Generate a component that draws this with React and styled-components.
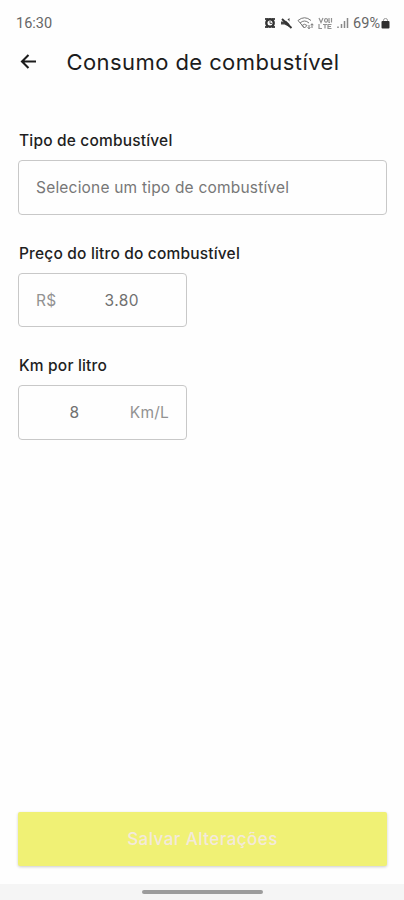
import styled, { createGlobalStyle } from "styled-components";

const GlobalStyle = createGlobalStyle`
  * {
    box-sizing: border-box;
  }
  body {
    margin: 0;
    background-color: #fefefe;
    font-family: Inter, "Liberation Sans", sans-serif;
  }
`;

const Screen = styled.div`
  display: flex;
  flex-direction: column;
  height: 100vh;
  min-height: 900px;
  overflow: hidden;
`;

const StatusBar = styled.div`
  display: flex;
  align-items: center;
  justify-content: space-between;
  height: 36px;
  padding: 10px 14px 0 16px;
  font-family: Roboto, sans-serif;
  font-size: 14.5px;
  color: #666666;
`;

const StatusIcons = styled.div`
  display: flex;
  align-items: center;
  gap: 4px;
`;

const Battery = styled.div`
  display: flex;
  align-items: center;
  gap: 1px;
  font-size: 14.5px;
`;

const Header = styled.header`
  display: flex;
  align-items: center;
  height: 51px;
  padding-left: 20px;
`;

const BackButton = styled.button`
  display: flex;
  width: 18px;
  padding: 0;
  border: none;
  background: none;
  color: #1c1c1c;
  cursor: pointer;
`;

const Title = styled.h1`
  margin: 0 0 0 28.5px;
  font-size: 22px;
  font-weight: 400;
  letter-spacing: 0.42px;
  color: #1c1c1c;
  white-space: nowrap;
`;

const Form = styled.form`
  display: flex;
  flex: 1;
  flex-direction: column;
  padding: 43px 17px 18px 18px;
`;

const Field = styled.div`
  margin-bottom: 28px;
`;

const Label = styled.label`
  display: block;
  height: 30px;
  padding-left: 1px;
  font-size: 15.5px;
  font-weight: 500;
  line-height: 21px;
  letter-spacing: 0.18px;
  color: #1f1f1f;
`;

const InputBox = styled.div`
  display: flex;
  align-items: center;
  width: ${(props) => (props.$half ? "169px" : "100%")};
  height: 54.5px;
  padding: 1px 17px 0;
  border: 1.5px solid #c8c8c8;
  border-radius: 4px;
  font-size: 15.5px;
  color: #707070;
`;

const Placeholder = styled.span`
  letter-spacing: 0.2px;
  color: #777777;
`;

const Unit = styled.span`
  letter-spacing: 0.2px;
  color: #929292;
`;

const Value = styled.span`
  flex: 1;
  padding: 0 ${(props) => props.$right || "0"} 0 ${(props) => props.$left || "0"};
  letter-spacing: 0.4px;
  text-align: center;
`;

const SaveButton = styled.button`
  height: 54px;
  margin-top: auto;
  border: none;
  border-radius: 2px;
  background-color: #f0f175;
  box-shadow: 0 1px 3px rgba(0, 0, 0, 0.2);
  font-family: inherit;
  font-size: 17px;
  font-weight: 500;
  letter-spacing: 0.45px;
  color: #f3e9dc;
`;

const NavBar = styled.div`
  display: flex;
  justify-content: center;
  height: 16px;
  padding-top: 6px;
  background-color: #f5f5f5;
`;

const NavHandle = styled.div`
  width: 121px;
  height: 4px;
  border-radius: 2px;
  background-color: #9c9c9c;
`;

const BackIcon = () => (
  <svg width="18" height="18" viewBox="0 0 18 18" fill="none">
    <path
      d="M16 8.5H2.5M8.5 2L2 8.5L8.5 15"
      stroke="currentColor"
      strokeWidth="2.1"
    />
  </svg>
);

const AlarmIcon = () => (
  <svg width="12" height="12" viewBox="0 0 12 12">
    <path d="M1 1h3v2H1zM8 1h3v2H8zM1 9h3v2H1zM8 9h3v2H8z" fill="#4a4a4a" />
    <circle cx="6" cy="6" r="3.7" fill="none" stroke="#333333" strokeWidth="2.4" />
    <path d="M6 4v2.4h2" fill="none" stroke="#555555" />
  </svg>
);

const MuteIcon = () => (
  <svg width="13" height="12" viewBox="0 0 13 12">
    <path d="M1 4.5h3.5L9.5 1v9L4.5 7.5H1z" fill="#444444" />
    <path d="M4.5 1l7 6.5" stroke="#fefefe" strokeWidth="2" />
    <path d="M2 2l9.5 9" stroke="#333333" strokeWidth="1.9" />
  </svg>
);

const WifiIcon = () => (
  <svg width="17" height="14" viewBox="0 0 17 14" fill="none" stroke="#777777">
    <path d="M1 4.5Q7.5-1 14 4.5M3 7Q7.5 3 12 7M5 9.5Q7.5 7 10 9.5L7.5 12zM1 4.5L7.5 12" />
    <path d="M12 9v3.5m-1.3-1.2l1.3 1.5 1.3-1.5M15 12V8m-1.3 1.2L15 7.7l1.3 1.5" />
  </svg>
);

const VolteIcon = () => (
  <svg
    width="15"
    height="13"
    viewBox="0 0 15 13"
    fill="none"
    stroke="#929292"
    strokeWidth="1.2"
  >
    <path d="M1 1l2 4.5 2-4.5M8 1.5a1.5 1.8 0 1 0 .1 0M11 1v4.5h1M1 7v4.5h3M5 7.5h4M7 7.5v4M13.5 7.5H10v4h3.5M10 9.5h3M13.5 1v4.5" />
  </svg>
);

const SignalIcon = () => (
  <svg width="12" height="12" viewBox="0 0 12 12" fill="none" stroke="#888888">
    <path d="M1 9.5V11M4.5 7v4M7.5 4v7M10.5 1v10" strokeWidth="1.5" />
  </svg>
);

const BatteryIcon = () => (
  <svg width="9" height="12" viewBox="0 0 9 12">
    <path d="M2.5 5V3.2Q2.5 1.5 4.5 1.5t2 1.7V5" fill="none" stroke="#999999" />
    <rect x="0.5" y="4" width="8" height="7.5" rx="1" fill="#303030" />
  </svg>
);

export default function App() {
  return (
    <>
      <GlobalStyle />
      <Screen>
        <StatusBar>
          <span>16:30</span>
          <StatusIcons>
            <AlarmIcon />
            <MuteIcon />
            <WifiIcon />
            <VolteIcon />
            <SignalIcon />
            <Battery>
              69%
              <BatteryIcon />
            </Battery>
          </StatusIcons>
        </StatusBar>
        <Header>
          <BackButton type="button" aria-label="Voltar">
            <BackIcon />
          </BackButton>
          <Title>Consumo de combustível</Title>
        </Header>
        <Form>
          <Field>
            <Label>Tipo de combustível</Label>
            <InputBox>
              <Placeholder>Selecione um tipo de combustível</Placeholder>
            </InputBox>
          </Field>
          <Field>
            <Label>Preço do litro do combustível</Label>
            <InputBox $half>
              <Unit>R$</Unit>
              <Value $left="18px">3.80</Value>
            </InputBox>
          </Field>
          <Field>
            <Label>Km por litro</Label>
            <InputBox $half>
              <Value $right="17px">8</Value>
              <Unit>Km/L</Unit>
            </InputBox>
          </Field>
          <SaveButton type="button">Salvar Alterações</SaveButton>
        </Form>
        <NavBar>
          <NavHandle />
        </NavBar>
      </Screen>
    </>
  );
}
